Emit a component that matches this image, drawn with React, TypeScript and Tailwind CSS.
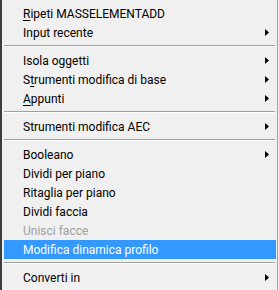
import React from "react";

type Item =
  | { type: "sep" }
  | { type: "item"; label: React.ReactNode; sub?: boolean; disabled?: boolean; active?: boolean };

const U = ({ c }: { c: string }) => <span className="underline underline-offset-2">{c}</span>;

const items: Item[] = [
  { type: "item", label: <><U c="R" />ipeti MASSELEMENTADD</> },
  { type: "item", label: "Input recente", sub: true },
  { type: "sep" },
  { type: "item", label: "Isola oggetti", sub: true },
  { type: "item", label: <>S<U c="t" />rumenti modifica di base</>, sub: true },
  { type: "item", label: <><U c="A" />ppunti</>, sub: true },
  { type: "sep" },
  { type: "item", label: "Strumenti modifica AEC", sub: true },
  { type: "sep" },
  { type: "item", label: "Booleano", sub: true },
  { type: "item", label: "Dividi per piano" },
  { type: "item", label: "Ritaglia per piano" },
  { type: "item", label: "Dividi faccia" },
  { type: "item", label: "Unisci facce", disabled: true },
  { type: "item", label: "Modifica dinamica profilo", active: true },
  { type: "sep" },
  { type: "item", label: "Converti in", sub: true },
];

const Arrow = ({ white }: { white?: boolean }) => (
  <svg width="4" height="7" viewBox="0 0 4 7" className="block">
    <path d="M0 0 L4 3.5 L0 7 Z" fill={white ? "#fff" : "#000"} />
  </svg>
);

export default function App() {
  return (
    <div
      className="w-[279px] h-[290px] flex bg-[#f0f0f0] overflow-hidden"
      style={{ fontFamily: 'Roboto, "Noto Sans", sans-serif' }}
    >
      <div className="w-[2px] bg-[#3c3c3c]" />
      <div className="flex-1 flex flex-col pl-[2px] pt-[4px] pr-[1px] border-r border-[#a0a0a0]">
        {items.map((it, i) =>
          it.type === "sep" ? (
            <div key={i} className="h-[9px] flex flex-col pt-[3px] pr-[1px]">
              <div className="h-px bg-[#a0a0a0]" />
              <div className="h-px bg-white" />
            </div>
          ) : (
            <div
              key={i}
              className={
                "h-[19px] flex items-center pl-[19px] pr-[7px] text-[12px] leading-none " +
                (it.active
                  ? "bg-[#3399ff] text-white"
                  : it.disabled
                  ? "text-[#a0a0a0]"
                  : "text-black")
              }
            >
              <span className="flex-1 whitespace-nowrap">{it.label}</span>
              {it.sub && <Arrow white={it.active} />}
            </div>
          )
        )}
      </div>
      <div className="w-px bg-[#f0f0f0]" />
    </div>
  );
}
